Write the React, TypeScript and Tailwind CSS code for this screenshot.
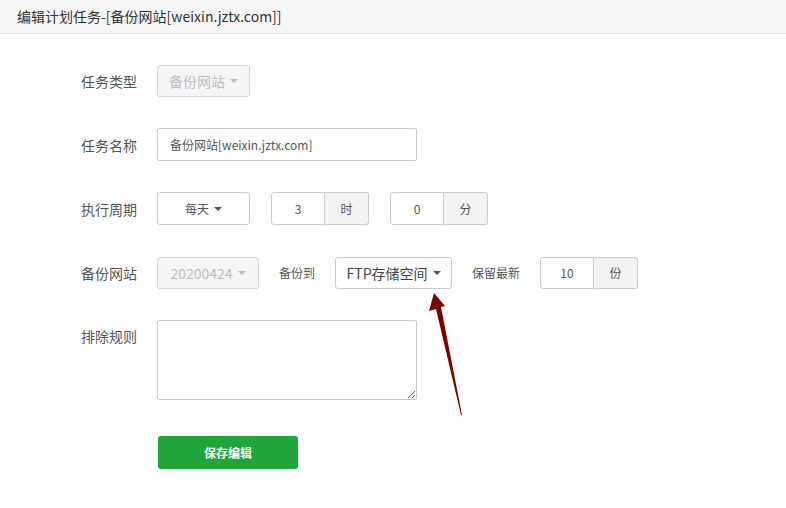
import React from "react";

const Caret = ({ light }: { light?: boolean }) => (
  <span
    className={
      "inline-block ml-[5px] w-0 h-0 border-t-[4px] border-x-[4px] border-x-transparent align-middle " +
      (light ? "border-t-[#c0c0c0]" : "border-t-[#555]")
    }
  />
);

const Label = ({ children, top }: { children: React.ReactNode; top?: boolean }) => (
  <div
    className={
      "w-[157px] shrink-0 pl-[81px] text-[14px] leading-[20px] text-[#555] " + (top ? "pt-[6px]" : "")
    }
  >
    {children}
  </div>
);

const Group = ({ value, unit, h }: { value: string; unit: string; h: string }) => (
  <div className={"flex " + h}>
    <div className="w-[54px] h-full border border-[#ccc] rounded-l-[3px] flex items-center justify-center text-[12px] text-[#555] bg-white">
      {value}
    </div>
    <div className="w-[44px] h-full border border-l-0 border-[#ccc] rounded-r-[3px] bg-[#f3f3f3] flex items-center justify-center text-[12px] text-[#555]">
      {unit}
    </div>
  </div>
);

export default function App() {
  return (
    <div className="relative w-[786px] h-[508px] overflow-hidden bg-white font-['Noto_Sans_CJK_SC',sans-serif]">
      <div className="h-[34px] bg-[#f6f6f6] border-b border-[#e4e4e4] pl-[17px] flex items-center text-[14px] text-[#333]">
        编辑计划任务-[备份网站[weixin.jztx.com]]
      </div>

      <div className="pt-[31px] flex flex-col">
        <div className="flex items-center">
          <Label>任务类型</Label>
          <div className="w-[93px] h-[32px] border border-[#d6d6d6] rounded-[3px] bg-[#f5f5f5] flex items-center justify-center text-[14px] text-[#bdbdbd]">
            备份网站
            <Caret light />
          </div>
        </div>

        <div className="flex items-center mt-[31px]">
          <Label>任务名称</Label>
          <div className="w-[260px] h-[33px] border border-[#ccc] rounded-[2px] bg-white flex items-center pl-[12px] text-[12px] text-[#555]">
            备份网站[weixin.jztx.com]
          </div>
        </div>

        <div className="flex items-center mt-[31px]">
          <Label>执行周期</Label>
          <div className="flex items-center gap-[21px]">
            <div className="w-[93px] h-[33px] border border-[#ccc] rounded-[3px] bg-white flex items-center justify-center text-[12px] text-[#555]">
              每天
              <Caret />
            </div>
            <Group value="3" unit="时" h="h-[33px]" />
            <Group value="0" unit="分" h="h-[33px]" />
          </div>
        </div>

        <div className="flex items-center mt-[32px]">
          <Label>备份网站</Label>
          <div className="flex items-center gap-[20px]">
            <div className="w-[102px] h-[32px] border border-[#d6d6d6] rounded-[3px] bg-[#f5f5f5] flex items-center justify-center text-[14px] text-[#bdbdbd]">
              20200424
              <Caret light />
            </div>
            <div className="text-[12px] text-[#555]">备份到</div>
            <div className="w-[117px] h-[32px] border border-[#ccc] rounded-[3px] bg-white flex items-center justify-center text-[14px] text-[#444]">
              FTP存储空间
              <Caret />
            </div>
            <div className="text-[12px] text-[#555]">保留最新</div>
            <Group value="10" unit="份" h="h-[32px]" />
          </div>
        </div>

        <div className="flex items-start mt-[31px]">
          <Label top>排除规则</Label>
          <textarea className="block w-[260px] h-[80px] border border-[#ccc] rounded-[2px] bg-white outline-none" />
        </div>
      </div>

      <div className="mt-[36px] pl-[158px]">
        <button className="w-[140px] h-[33px] rounded-[3px] bg-[#20a53a] text-white text-[12px] font-bold">
          保存编辑
        </button>
      </div>

      <svg
        className="absolute left-[420px] top-[285px]"
        width="50"
        height="135"
        viewBox="0 0 50 135"
      >
        <polygon
          points="14,8 25,21 21,22 42,130 41,130 16,24 9,26"
          fill="#7d0000"
        />
      </svg>
    </div>
  );
}
